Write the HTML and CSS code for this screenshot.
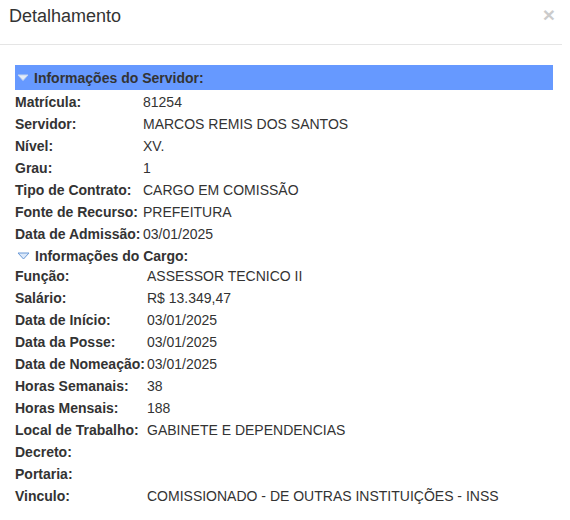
FILE: index.html
```html
<!DOCTYPE html>
<html lang="pt-BR">
<head>
<meta charset="utf-8">
<title>Detalhamento</title>
<link rel="stylesheet" href="styles.css">
</head>
<body>
<div class="modal">
  <div class="modal-header">
    <h4 class="modal-title">Detalhamento</h4>
    <span class="close">×</span>
  </div>
  <div class="modal-body">
    <div class="section-bar">
      <svg class="tri" width="12" height="8" viewBox="0 0 12 8"><polygon points="1,1 11,1 6,6.5" fill="#e4ecf8" stroke="#c4d4ee" stroke-width="1"/></svg>
      <span>Informações do Servidor:</span>
    </div>
    <div class="grid grid-servidor">
      <div class="lbl">Matrícula:</div><div class="val">81254</div>
      <div class="lbl">Servidor:</div><div class="val">MARCOS REMIS DOS SANTOS</div>
      <div class="lbl">Nível:</div><div class="val">XV.</div>
      <div class="lbl">Grau:</div><div class="val">1</div>
      <div class="lbl">Tipo de Contrato:</div><div class="val">CARGO EM COMISSÃO</div>
      <div class="lbl">Fonte de Recurso:</div><div class="val">PREFEITURA</div>
      <div class="lbl">Data de Admissão:</div><div class="val">03/01/2025</div>
    </div>
    <div class="section-plain">
      <svg class="tri tri-plain" width="13" height="8" viewBox="0 0 13 8"><polygon points="1,1 12,1 6.5,7" fill="#dce9fa" stroke="#6b9ad6" stroke-width="1"/></svg>
      <span>Informações do Cargo:</span>
    </div>
    <div class="grid grid-cargo">
      <div class="lbl">Função:</div><div class="val">ASSESSOR TECNICO II</div>
      <div class="lbl">Salário:</div><div class="val">R$ 13.349,47</div>
      <div class="lbl">Data de Início:</div><div class="val">03/01/2025</div>
      <div class="lbl">Data da Posse:</div><div class="val">03/01/2025</div>
      <div class="lbl">Data de Nomeação:</div><div class="val">03/01/2025</div>
      <div class="lbl">Horas Semanais:</div><div class="val">38</div>
      <div class="lbl">Horas Mensais:</div><div class="val">188</div>
      <div class="lbl">Local de Trabalho:</div><div class="val">GABINETE E DEPENDENCIAS</div>
      <div class="lbl">Decreto:</div><div class="val"></div>
      <div class="lbl">Portaria:</div><div class="val"></div>
      <div class="lbl">Vinculo:</div><div class="val">COMISSIONADO - DE OUTRAS INSTITUIÇÕES - INSS</div>
    </div>
  </div>
</div>
</body>
</html>
```

FILE: styles.css
```css
html, body {
  margin: 0;
  padding: 0;
  background: #fff;
}
body {
  font-family: "Liberation Sans", Arial, sans-serif;
  color: #333;
  font-size: 14px;
  overflow: hidden;
}
.modal {
  width: 570px;
}
.modal-header {
  width: 562px;
  height: 45px;
  box-sizing: border-box;
  border-bottom: 1px solid #e5e5e5;
  display: flex;
  align-items: flex-start;
  justify-content: space-between;
  padding: 5px 0 0 9px;
}
.modal-title {
  margin: 0;
  font-size: 18px;
  font-weight: normal;
  line-height: 22px;
  color: #333;
}
.close {
  font-size: 21px;
  font-weight: bold;
  line-height: 20px;
  color: #000;
  opacity: 0.2;
  margin-right: 7px;
  margin-top: 0;
}
.modal-body {
  padding: 20px 17px 0 15px;
}
.section-bar {
  background: #6699ff;
  height: 25px;
  display: flex;
  align-items: center;
  font-weight: bold;
  font-size: 14px;
  color: #333;
  padding-left: 2px;
}
.section-plain {
  height: 20px;
  display: flex;
  align-items: flex-start;
  font-weight: bold;
  font-size: 14px;
  line-height: 22px;
  color: #333;
  padding-left: 2px;
}
.tri {
  display: block;
  margin-right: 5px;
  margin-top: 1px;
}
.tri-plain {
  margin-top: 7px;
}
.grid {
  display: grid;
  grid-auto-rows: 22px;
  align-items: center;
}
.grid-servidor {
  grid-template-columns: 128px 1fr;
  padding-top: 1px;
}
.grid-cargo {
  grid-template-columns: 132px 1fr;
}
.lbl {
  font-weight: bold;
  white-space: nowrap;
  line-height: 22px;
}
.val {
  line-height: 22px;
  white-space: nowrap;
}
```
